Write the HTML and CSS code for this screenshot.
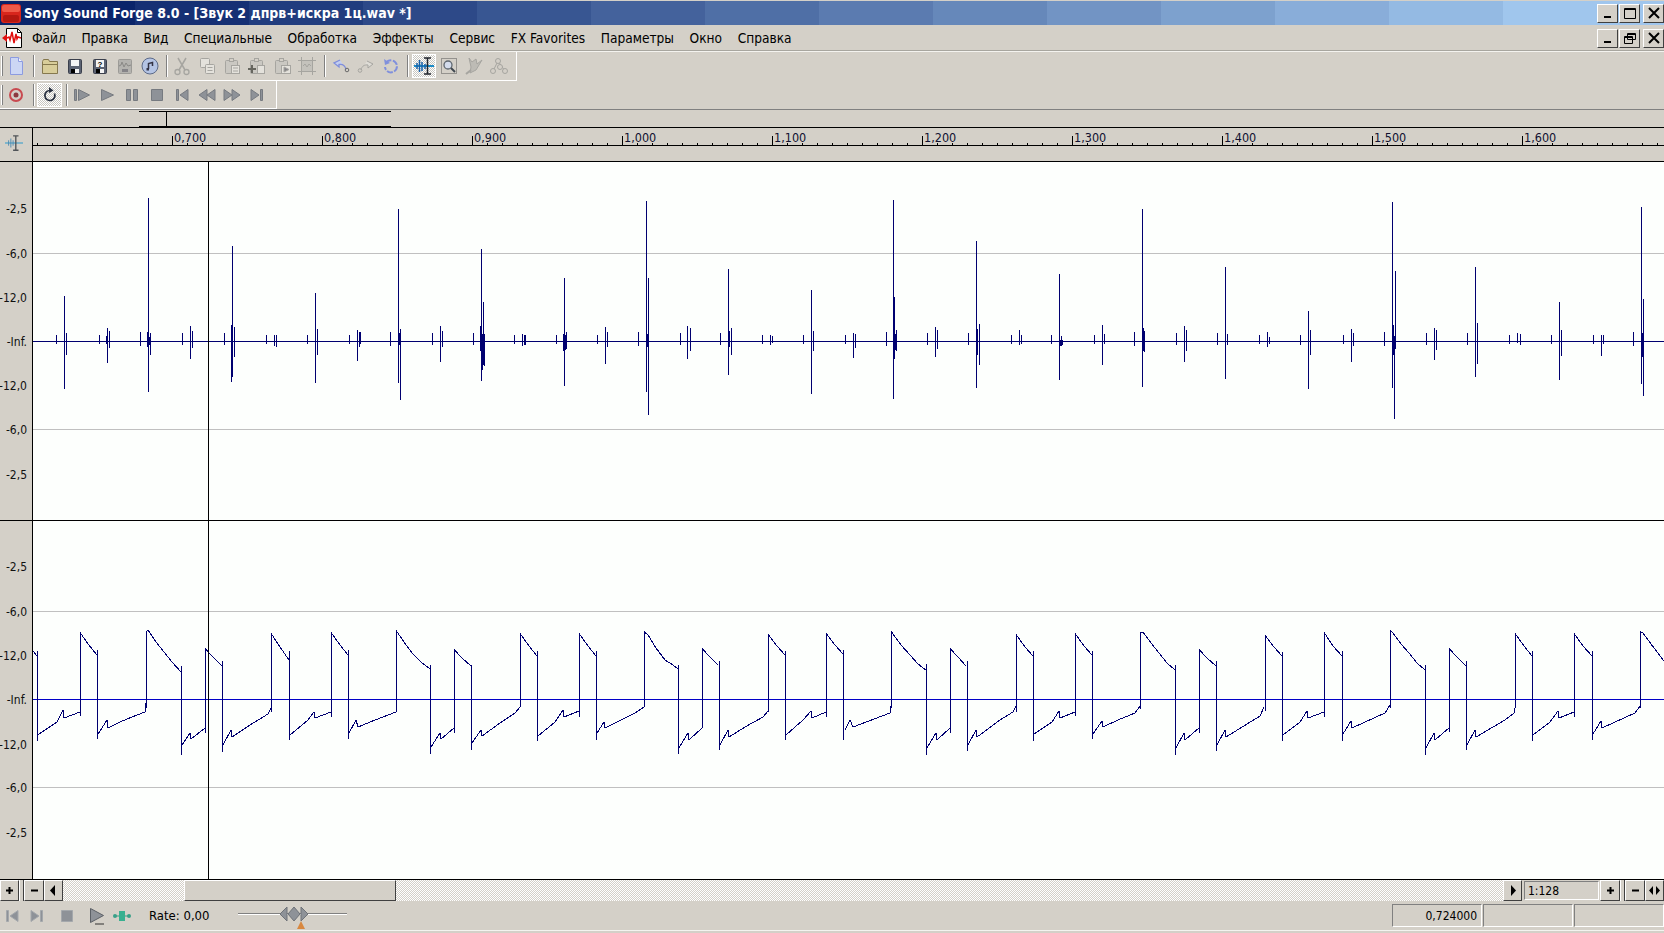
FILE: index.html
```html
<!DOCTYPE html>
<html lang="ru">
<head>
    <meta charset="UTF-8">
    <title>Sony Sound Forge 8.0</title>
    <link rel="stylesheet" href="styles.css">
</head>
<body>
    <div class="titlebar">
        <svg class="app-icon" width="22" height="21" viewBox="0 0 22 21"><rect x="1" y="1" width="20" height="19" rx="3" fill="#d8261c"/><rect x="2" y="2" width="18" height="7" rx="2" fill="#ee5a48"/><rect x="3" y="12" width="16" height="7" rx="2" fill="#b41810"/></svg>
        <span class="title-text">Sony Sound Forge 8.0 - [Звук 2 дпрв+искра 1ц.wav *]</span>
        <div class="win-buttons">
            <button class="win-btn"><svg width="12" height="12" viewBox="0 0 12 12"><rect x="2" y="9" width="7" height="2"/></svg></button>
            <button class="win-btn"><svg width="12" height="12" viewBox="0 0 12 12"><path d="M0.5 1.5h11v10h-11z M0.5 2.5h11" fill="none" stroke="#000"/></svg></button>
            <button class="win-btn win-close"><svg width="12" height="12" viewBox="0 0 12 12"><path d="M1 1l10 10M11 1L1 11" stroke="#000" stroke-width="2"/></svg></button>
        </div>
    </div>

    <div class="menubar">
        <svg class="doc-icon" width="22" height="22" viewBox="0 0 22 22"><path d="M4.5 1.5h11l4 4v15h-15z" fill="#fff" stroke="#000"/><path d="M15.5 1.5v4h4" fill="none" stroke="#000"/><path d="M5 11l2-1 1 3 2-8 2 11 2-9 1 5 1-2 3 1" fill="none" stroke="#e01010" stroke-width="1.5"/><path d="M0 11l5-4v8z" fill="#e01010"/></svg>
        <ul class="menu">
            <li>Файл</li>
            <li>Правка</li>
            <li>Вид</li>
            <li>Специальные</li>
            <li>Обработка</li>
            <li>Эффекты</li>
            <li>Сервис</li>
            <li>FX Favorites</li>
            <li>Параметры</li>
            <li>Окно</li>
            <li>Справка</li>
        </ul>
        <div class="win-buttons doc-buttons">
            <button class="win-btn"><svg width="12" height="12" viewBox="0 0 12 12"><rect x="2" y="9" width="7" height="2"/></svg></button>
            <button class="win-btn"><svg width="12" height="12" viewBox="0 0 12 12"><path d="M3.5 1.5h8v6h-8z M3.5 2.5h8 M0.5 4.5h8v7h-8z M0.5 5.5h8" fill="#d4d0c8" stroke="#000"/></svg></button>
            <button class="win-btn win-close"><svg width="12" height="12" viewBox="0 0 12 12"><path d="M1 1l10 10M11 1L1 11" stroke="#000" stroke-width="2"/></svg></button>
        </div>
    </div>

    <div class="toolbar toolbar-main">
        <span class="grip"></span>
        <span class="tool"><svg viewBox="0 0 20 20"><path d="M4.5 1.5h8l4 4v13h-12z" fill="#ccd6f4" stroke="#8c9be0"/><path d="M12.5 1.5v4h4" fill="#f2f4fc" stroke="#8c9be0"/></svg></span>
        <span class="sep"></span>
        <span class="tool"><svg viewBox="0 0 20 20"><path d="M2.5 5.5l1-2h5l1 2h8v12h-15z" fill="#d8cd9a" stroke="#85784e"/><path d="M2.5 8.5h15" stroke="#85784e"/></svg></span>
        <span class="tool"><svg viewBox="0 0 20 20"><rect x="3.5" y="3.5" width="13" height="14" rx="1" fill="#5b6272" stroke="#3a3f4c"/><rect x="6" y="4" width="8" height="6" fill="#f4f4f4"/><rect x="6" y="13" width="8" height="4" fill="#f4f4f4"/><rect x="6" y="13" width="4" height="4" fill="#000"/></svg></span>
        <span class="tool"><svg viewBox="0 0 20 20"><rect x="3.5" y="3.5" width="13" height="14" rx="1" fill="#5b6272" stroke="#3a3f4c"/><rect x="6" y="4" width="8" height="7" fill="#f4f4f4"/><rect x="6" y="13" width="8" height="4" fill="#f4f4f4"/><rect x="6" y="13" width="4" height="4" fill="#000"/><text class="mini-q" x="10" y="10.5">?</text></svg></span>
        <span class="tool"><svg viewBox="0 0 20 20"><rect x="3.5" y="3.5" width="13" height="14" rx="1" fill="#b4b3af" stroke="#9c9b97"/><path d="M4 10l2-1 1-3 2 5 2-4 2 3 3-1" fill="none" stroke="#8a8986"/><rect x="7" y="13" width="6" height="3" fill="#858488"/></svg></span>
        <span class="tool"><svg viewBox="0 0 20 20"><circle cx="10" cy="10" r="8" fill="#b4c4e4" stroke="#5c6a88"/><path d="M8.500 13V7.500l4-1V10" fill="none" stroke="#334" stroke-width="1.500"/><rect x="6.500" y="12" width="2.500" height="2.500" fill="#334"/></svg></span>
        <span class="sep sep-tight"></span>
        <span class="tool"><svg class="dim" viewBox="0 0 20 20"><path d="M6 2l7 12M14 2L7 14" fill="none" stroke-width="1.500"/><circle cx="5.500" cy="16" r="2.500" fill="none" stroke-width="1.300"/><circle cx="14.500" cy="16" r="2.500" fill="none" stroke-width="1.300"/></svg></span>
        <span class="tool"><svg class="dim" viewBox="0 0 20 20"><rect x="3.5" y="2.5" width="9" height="9" rx="1" fill="#e4e2dc"/><rect x="8.5" y="8.5" width="9" height="9" rx="1" fill="#e4e2dc"/><path d="M10.5 11.5h5M10.5 14.5h5"/></svg></span>
        <span class="tool"><svg class="dim" viewBox="0 0 20 20"><rect x="3.5" y="4.5" width="12" height="13" rx="1"/><rect x="7.5" y="2.5" width="4" height="3" fill="#d4d0c8"/><rect x="9.5" y="9.5" width="8" height="8" fill="#e4e2dc"/><path d="M11 12h5M11 15h5"/></svg></span>
        <span class="tool"><svg class="dim" viewBox="0 0 20 20"><rect x="3.5" y="4.5" width="12" height="13" rx="1"/><rect x="7.5" y="2.5" width="4" height="3" fill="#d4d0c8"/><rect x="10.5" y="9.5" width="7" height="8" fill="#e4e2dc"/><path d="M1 13h8M5 9v8" stroke="#66665f" stroke-width="2"/></svg></span>
        <span class="tool"><svg class="dim" viewBox="0 0 20 20"><rect x="3.5" y="4.5" width="12" height="13" rx="1"/><rect x="7.5" y="2.5" width="4" height="3" fill="#d4d0c8"/><rect x="9.5" y="9.5" width="9" height="8" fill="#e4e2dc"/><path d="M12 11l5 2.5-5 2.5z" fill="#858488"/></svg></span>
        <span class="tool"><svg class="dim" viewBox="0 0 20 20"><rect x="4.5" y="4.5" width="11" height="11" fill="#c4c2bc"/><path d="M1 4.5h18M1 15.5h18M4.5 1v18M15.5 1v18M6 10l2-2 2 3 2-3 2 2" fill="none"/></svg></span>
        <span class="sep"></span>
        <span class="tool"><svg viewBox="0 0 20 20"><path d="M9 4L3 7l5 4V8.500c3-.5 6 .5 7 5" fill="#c4cff0" stroke="#7f8edc" stroke-width="1.300"/><circle cx="16" cy="14" r="1.800" fill="none" stroke="#6a6a6a"/></svg></span>
        <span class="tool"><svg class="dim" viewBox="0 0 20 20"><path d="M11 5l6 3-5 4V9c-3-.5-6 .5-7 5" fill="#dedcd6"/><circle cx="4" cy="14.500" r="1.800" fill="none"/></svg></span>
        <span class="tool"><svg viewBox="0 0 20 20"><path d="M5 7a6 6 0 1 1-1 4" fill="none" stroke="#8090dc" stroke-width="2" stroke-dasharray="6 1.500"/><path d="M3 3l1 6 5-2z" fill="#8090dc"/></svg></span>
        <span class="sep sep-tool"></span>
        <span class="tool tool-active"><svg viewBox="0 0 20 20"><path d="M0 10h20" stroke="#1c8cc8" stroke-width="2"/><path d="M3 7v6M5.500 4v12M8 6v9M11 8v5" stroke="#1860a8" stroke-width="1.500"/><path d="M10 2h7M10 18h7M13.500 2v16" stroke="#20242c" stroke-width="1.500"/></svg></span>
        <span class="tool"><svg viewBox="0 0 20 20"><rect x="2.500" y="2.500" width="15" height="15" fill="none" stroke="#555" stroke-dasharray="1 1"/><circle cx="9" cy="9" r="4" fill="#d4dcec" stroke="#606870" stroke-width="1.300"/><path d="M12 12l4 4" stroke="#404850" stroke-width="2"/></svg></span>
        <span class="tool"><svg class="dim" viewBox="0 0 20 20"><path d="M5 2l3 4 4-3 1 5 5-4-6 10-6 3 1-6z" fill="#bdbbb5"/><path d="M2 18l5-4" stroke-width="2"/></svg></span>
        <span class="tool"><svg class="dim" viewBox="0 0 20 20"><path d="M4 15l5-10 7 10" fill="none"/><circle cx="9" cy="5" r="2.500" fill="#d4d0c8"/><circle cx="4" cy="15" r="2.500" fill="#d4d0c8"/><circle cx="16" cy="15" r="2.500" fill="#d4d0c8"/><circle cx="11" cy="11" r="2.500" fill="#d4d0c8"/></svg></span>
    </div>

    <div class="toolbar toolbar-transport">
        <span class="grip"></span>
        <span class="tool"><svg viewBox="0 0 20 20"><circle cx="10" cy="10" r="6" fill="none" stroke="#c84a50" stroke-width="2"/><circle cx="10" cy="10" r="2.500" fill="#8c3a40"/></svg></span>
        <span class="sep"></span>
        <span class="tool tool-active"><svg viewBox="0 0 20 20"><path d="M14.500 8.500a5 5 0 1 1-4.500-3" fill="none" stroke="#283040" stroke-width="1.700"/><path d="M9 2l4.500 3.500L9 8z" fill="#283040"/></svg></span>
        <span class="sep sep-tight"></span>
        <span class="tool"><svg class="steel" viewBox="0 0 20 20"><path d="M2.500 4.500h2v11h-2zM6.500 4.500l11 5.500-11 5.500z"/></svg></span>
        <span class="tool"><svg class="steel" viewBox="0 0 20 20"><path d="M4.500 4.500l12 5.500-12 5.500z"/></svg></span>
        <span class="tool"><svg class="steel" viewBox="0 0 20 20"><path d="M4.500 4.500h4v11h-4zM11.500 4.500h4v11h-4z"/></svg></span>
        <span class="tool"><svg class="steel" viewBox="0 0 20 20"><path d="M4.500 4.500h11v11h-11z"/></svg></span>
        <span class="tool"><svg class="steel" viewBox="0 0 20 20"><path d="M4.500 4.500h2v11h-2zM16 4.500l-8 5.500 8 5.500z"/></svg></span>
        <span class="tool"><svg class="steel" viewBox="0 0 20 20"><path d="M10 4.500l-8 5.500 8 5.500zM18 4.500l-8 5.500 8 5.500z"/></svg></span>
        <span class="tool"><svg class="steel" viewBox="0 0 20 20"><path d="M2 4.500l8 5.500-8 5.500zM10 4.500l8 5.500-8 5.500z"/></svg></span>
        <span class="tool"><svg class="steel" viewBox="0 0 20 20"><path d="M4 4.500l8 5.500-8 5.500zM13.500 4.500h2v11h-2z"/></svg></span>
    </div>

    <div class="overview">
        <div class="overview-range"><span class="overview-cursor"></span></div>
    </div>

    <div class="ruler">
        <div class="ruler-corner">
            <svg width="18" height="18" viewBox="0 0 20 20"><path d="M0 10h20" stroke="#58a8cc" stroke-width="1.500"/><path d="M4 7v6M6.500 5v10M9 7v6" stroke="#4a88b0"/><path d="M9 2h6M9 18h6M12 2v16" stroke="#505458" stroke-width="1.500"/></svg>
        </div>
        <div class="ruler-track">
            <div class="ruler-scale">
                <span class="ruler-mark">0,700</span>
                <span class="ruler-mark">0,800</span>
                <span class="ruler-mark">0,900</span>
                <span class="ruler-mark">1,000</span>
                <span class="ruler-mark">1,100</span>
                <span class="ruler-mark">1,200</span>
                <span class="ruler-mark">1,300</span>
                <span class="ruler-mark">1,400</span>
                <span class="ruler-mark">1,500</span>
                <span class="ruler-mark">1,600</span>
            </div>
        </div>
    </div>

    <div class="wave-panel">
        <!-- viewBox uses the window's own y so the numbers read as page pixels -->
        <svg class="channel" viewBox="0 162 1664 359">
            <rect class="db-col" x="0" y="162" width="32" height="359"/>
            <path class="grid" d="M33 253.500H1664M33 429.500H1664"/>
            <path class="zero zero-top" d="M33 341.500H1664"/>
            <path class="wave" d="M56.500 335V344M64.500 296V389M66.500 333V355M99.500 335V344M107.500 328V363M106.500 336V344M109.500 331V348M140.500 332V346M148.500 198V392M147.500 332V347M149.500 337V345M150.500 333V355M182.500 333V345M190.500 326V359M192.500 331V348M224.500 333V345M231.500 325V382M232.500 246V377M234.500 327V357M266.500 335V344M274.500 335V346M276.500 335V347M307.500 335V344M315.500 293V383M317.500 329V355M349.500 335V344M357.500 330V361M359.500 332V347M360.500 332V344M390.500 332V346M398.500 209V383M399.500 333V345M400.500 329V400
            M432.500 333V345M440.500 326V362M442.500 331V347M473.500 333V345M480.500 326V351M481.500 249V381M482.500 334V370M483.500 302V365M484.500 334V366M514.500 335V344M522.500 334V346M524.500 335V345M525.500 335V345M556.500 335V344M563.500 334V351M564.500 278V386M565.500 335V350M566.500 332V349M597.500 335V344M605.500 327V364M607.500 332V347M638.500 332V346M646.500 201V392M647.500 334V347M648.500 278V415M680.500 333V345M687.500 326V359M690.500 328V351M720.500 333V345M728.500 269V375M729.500 331V347M731.500 328V355M762.500 335V344M770.500 335V345M772.500 336V343M803.500 335V344M811.500 290V394M813.500 331V351M845.500 335V344M853.500 333V358M855.500 334V348M886.500 332V346M893.500 200V399M894.500 297V359M895.500 334V350M896.500 330V351M927.500 333V345M935.500 327V357M937.500 330V349M968.500 333V345M976.500 241V388M977.500 329V355M979.500 324V365M1011.500 335V344M1019.500 330V345M1021.500 335V344
            M1051.500 335V344M1059.500 274V380M1060.500 340V346M1061.500 336V346M1062.500 340V345M1094.500 335V344M1102.500 325V365M1104.500 334V344M1134.500 332V346M1142.500 209V387M1143.500 328V351M1144.500 331V352M1176.500 333V345M1184.500 326V362M1186.500 330V351M1217.500 333V345M1225.500 267V379M1227.500 334V345M1259.500 335V344M1267.500 332V347M1269.500 337V344M1300.500 335V345M1308.500 311V389M1310.500 330V355M1343.500 335V344M1351.500 329V362M1353.500 333V346M1384.500 332V346M1392.500 202V388M1393.500 325V355M1394.500 336V419M1395.500 271V349M1426.500 333V345M1434.500 328V360M1436.500 330V350M1467.500 333V345M1475.500 267V377M1477.500 323V364M1509.500 335V344M1517.500 333V343M1520.500 334V345M1551.500 335V344M1559.500 302V380M1561.500 330V356M1593.500 335V344M1601.500 335V356M1603.500 335V344M1633.500 332V346M1641.500 207V384M1642.500 333V357M1643.500 299V396"/>
            <path class="cursor" d="M208.500 162V521"/>
            <path class="edge" d="M32.500 162V521M0 520.500H1664"/>
            <text class="db" x="27" y="213">-2,5</text>
            <text class="db" x="27" y="258">-6,0</text>
            <text class="db" x="27" y="302">-12,0</text>
            <text class="db" x="27" y="346">-Inf.</text>
            <text class="db" x="27" y="390">-12,0</text>
            <text class="db" x="27" y="434">-6,0</text>
            <text class="db" x="27" y="479">-2,5</text>
        </svg>
        <svg class="channel" viewBox="0 521 1664 359">
            <rect class="db-col" x="0" y="521" width="32" height="359"/>
            <path class="grid" d="M33 611.500H1664M33 787.500H1664"/>
            <path class="zero zero-bottom" d="M33 699.500H1664"/>
            <path class="wave" d="M33 651L37 656M37.500 651V741M37.500 735L57 722L63 710L64 718L80 712M80.500 716V633L88 644L97 655
            M97.500 650V739M97.500 735L107 720L108 728L120 722L132 717L145 712L146 703M146.500 708V632L148 630L156 642L164 652L172 662L181 672
            M181.500 666V755M182 745L190 733L191 739L205 728M205.500 733V649L213 657L222 666
            M222.500 661V752M223 745L231 730L232 737L250 725L268 714L271 708M271.500 712V634L280 647L289 660
            M289.500 651V740M290 735L308 720L314 712L315 718L331 712M331.500 717V633L340 645L348 655
            M348.500 650V739M349 733L356 720L358 727L375 720L396 712L396 704M396.500 708V631L404 642L412 653L421 662L430 669
            M430.500 665V754M431 747L440 733L441 739L454 728M454.500 733V650L462 658L471 666
            M471.500 665V750M472 743L481 730L482 736L500 723L515 713L520 707M520.500 707V634L529 646L537 656
            M537.500 651V741M538 736L555 722L563 710L564 717L579 711M579.500 717V634L588 646L596 656
            M596.500 651V740M597 733L604 722L605 728L635 713L644 707M644.500 707V632L648 635L656 648L665 660L673 665L678 669
            M678.500 665V754M679 748L688 733L689 740L702 728M702.500 728V649L710 657L718 665
            M719.500 661V750M720 745L728 730L729 737L745 727L763 717L768 711M768.500 712V635L777 646L785 655
            M785.500 651V740M786 735L803 720L811 711L812 718L826 712M826.500 717V634L835 645L843 654
            M843.500 650V740M845 730L850 720L853 727L890 713L891 706M891.500 708V632L893 634L901 645L910 655L918 664L926 670
            M926.500 664V755M927 748L936 733L937 740L950 728M950.500 733V649L958 657L966 666
            M967.500 661V751M968 745L976 730L977 737L1000 720L1013 712L1016 706M1016.500 712V635L1025 647L1033 656
            M1033.500 651V741M1034 734L1052 722L1059 711L1060 718L1075 712M1075.500 716V634L1084 646L1092 655
            M1092.500 651V739M1093 734L1102 721L1103 727L1118 720L1135 713L1140 706M1140.500 709V632L1143 632L1151 643L1159 653L1167 663L1175 670
            M1175.500 665V755M1176 748L1184 733L1185 740L1199 728M1199.500 733V650L1207 658L1216 666
            M1216.500 661V751M1217 745L1225 730L1226 737L1260 716L1264 707M1265.500 711V636L1274 647L1282 656
            M1282.500 652V741M1283 735L1300 722L1307 711L1308 718L1324 712M1324.500 717V633L1333 646L1342 656
            M1342.500 651V741M1343 734L1351 721L1352 728L1385 713L1390 705M1390.500 708V631L1393 633L1401 644L1409 653L1417 663L1425 670
            M1425.500 665V755M1426 748L1434 733L1435 740L1449 728M1449.500 732V649L1457 657L1466 666
            M1466.500 661V750M1467 745L1475 730L1476 737L1505 720L1514 713L1515 708M1515.500 708V634L1524 646L1532 656
            M1532.500 651V741M1533 735L1550 722L1558 711L1559 718L1574 712M1574.500 717V634L1583 646L1592 656
            M1592.500 651V740M1593 734L1601 721L1602 728L1635 713L1640 706M1640.500 708V632L1643 633L1651 644L1664 661"/>
            <path class="cursor" d="M208.500 521V880"/>
            <path class="edge" d="M32.500 521V880M0 879.500H1664"/>
            <text class="db" x="27" y="571">-2,5</text>
            <text class="db" x="27" y="616">-6,0</text>
            <text class="db" x="27" y="660">-12,0</text>
            <text class="db" x="27" y="704">-Inf.</text>
            <text class="db" x="27" y="749">-12,0</text>
            <text class="db" x="27" y="792">-6,0</text>
            <text class="db" x="27" y="837">-2,5</text>
        </svg>
    </div>

    <div class="scrollrow">
        <button class="sb-btn"><svg width="7" height="7" viewBox="0 0 7 7"><path d="M0 2.500h7v2H0zM2.500 0h2v7h-2z"/></svg></button>
        <span class="sb-gap"></span>
        <button class="sb-btn sb-wide"><svg width="7" height="7" viewBox="0 0 7 7"><path d="M0 2.500h7v2H0z"/></svg></button>
        <button class="sb-btn"><svg width="9" height="11" viewBox="0 0 9 11"><path d="M6 0v11L1 5.500z"/></svg></button>
        <div class="sb-track"><div class="sb-thumb"></div></div>
        <button class="sb-btn"><svg width="9" height="11" viewBox="0 0 9 11"><path d="M3 0v11l5-5.500z"/></svg></button>
        <div class="zoom-box">1:128</div>
        <button class="sb-btn sb-wide"><svg width="7" height="7" viewBox="0 0 7 7"><path d="M0 2.500h7v2H0zM2.500 0h2v7h-2z"/></svg></button>
        <span class="sb-gap"></span>
        <button class="sb-btn sb-wide"><svg width="7" height="7" viewBox="0 0 7 7"><path d="M0 2.500h7v2H0z"/></svg></button>
        <button class="sb-btn"><svg width="11" height="9" viewBox="0 0 11 9"><path d="M4 0v9L0 4.500zM7 0v9l4-4.500z"/></svg></button>
    </div>

    <div class="statusbar">
        <span class="st-icon"><svg class="steel-soft" width="20" height="20" viewBox="0 0 20 20"><path d="M4.500 4.500h2v11h-2zM16 4.500l-8 5.500 8 5.500z"/></svg></span>
        <span class="st-icon"><svg class="steel-soft" width="20" height="20" viewBox="0 0 20 20"><path d="M4 4.500l8 5.500-8 5.500zM13.500 4.500h2v11h-2z"/></svg></span>
        <span class="st-icon st-gap"><svg class="steel-soft" width="20" height="20" viewBox="0 0 20 20"><path d="M4.500 4.500h11v11h-11z"/></svg></span>
        <span class="st-icon st-gap"><svg width="20" height="20" viewBox="0 0 20 20"><path class="st-play" d="M3.500 2.500l13 7-13 7z"/><path d="M8 18h9" stroke="#303030"/></svg></span>
        <span class="st-icon"><svg width="20" height="20" viewBox="0 0 20 20"><path d="M2 10h16" stroke="#3a9a80"/><rect x="7" y="5" width="6" height="10" fill="#38b090"/><circle cx="3" cy="10" r="2" fill="#38a088"/><circle cx="17" cy="10" r="2" fill="#38a088"/></svg></span>
        <span class="rate">Rate: 0,00</span>
        <svg class="rate-slider" width="112" height="30" viewBox="0 0 112 30">
            <path d="M0 12.500H109" stroke="#808080"/><path d="M0 13.500H109" stroke="#fff"/>
            <path class="thumb" d="M42 13l7-7v14zM50 13l6-7 6 7-6 7zM63 6l7 7-7 7z"/>
            <path d="M59 28l4-8 4 8z" fill="#d88840"/>
        </svg>
        <div class="fields">
            <div class="field">0,724000</div>
            <div class="field"></div>
            <div class="field"></div>
        </div>
    </div>
</body>
</html>
```
FILE: styles.css
```css
* {
    margin: 0;
    padding: 0;
    box-sizing: border-box;
}

html, body {
    height: 100%;
    overflow: hidden;
}

body {
    background-color: #d4d0c8;
    color: #000;
    font-family: "DejaVu Sans Condensed", "Liberation Sans", sans-serif;
    font-size: 13px;
    display: flex;
    flex-direction: column;
}

button {
    font: inherit;
    cursor: default;
}

/* title bar */
.titlebar {
    height: 25px;
    flex: none;
    display: flex;
    align-items: center;
    border-top: 1px solid #d4d0c8;
    background: linear-gradient(to right,
        #0a246a 0 135px, #163074 135px 249px, #213d7e 249px 363px, #2d4988 363px 477px,
        #385692 477px 591px, #44629c 591px 705px, #4f6fa6 705px 819px, #5b7bb0 819px 933px,
        #6688ba 933px 1047px, #7294c4 1047px 1161px, #7da1ce 1161px 1275px,
        #89add9 1275px 1389px, #94bae3 1389px 1503px, #a0c6ed 1503px);
}

.app-icon {
    flex: none;
}

.title-text {
    margin-left: 2px;
    color: #fff;
    font-size: 14px;
    font-weight: bold;
    white-space: nowrap;
}

.win-buttons {
    margin-left: auto;
    display: flex;
    gap: 1px;
}

.win-btn {
    width: 21px;
    height: 19px;
    display: flex;
    align-items: center;
    justify-content: center;
    background-color: #d4d0c8;
    border: 1px solid;
    border-color: #fff #404040 #404040 #fff;
}

.win-close {
    margin-left: 2px;
}

/* menu */
.menubar {
    height: 27px;
    flex: none;
    display: flex;
    align-items: center;
    border-bottom: 1px solid #f4f3ef;
    box-shadow: inset 0 -1px 0 #a8a69f;
}

.doc-icon {
    flex: none;
    margin-left: 2px;
}

.menu {
    list-style: none;
    display: flex;
    margin-left: 8px;
    gap: 15.6px;
    font-size: 13.6px;
}

.doc-buttons {
    gap: 1px;
}

/* toolbars */
.toolbar {
    flex: none;
    display: flex;
    align-items: center;
    border-right: 1px solid #fff;
    border-bottom: 1px solid #fff;
}

.toolbar-main {
    width: 517px;
    height: 29px;
}

.toolbar-transport {
    width: 277px;
    height: 28px;
}

.grip {
    width: 3px;
    height: 20px;
    border-right: 1px solid #808080;
    box-shadow: inset -1px 0 0 #fff;
}

.tool {
    flex: none;
    width: 25px;
    height: 24px;
    display: flex;
    align-items: center;
    justify-content: center;
}

.tool svg {
    width: 20px;
    height: 20px;
}

.tool-active {
    background: repeating-conic-gradient(#fff 0 25%, #c8c6c0 0 50%) 0 0 / 2px 2px;
    border: 1px solid #fff;
}

.toolbar-main .tool-active {
    width: 24px;
}

.sep {
    flex: none;
    width: 2px;
    height: 22px;
    margin: 0 2px 0 5px;
    border-left: 1px solid #808080;
    border-right: 1px solid #fff;
}

.sep-tight {
    margin: 0 1px 0 4px;
}

.sep-tool {
    margin: 0 3px 0 4px;
}

.dim {
    fill: #cac8c2;
    stroke: #a6a5a0;
}

.steel {
    fill: #8e9298;
    stroke: #767a80;
}

.steel-soft {
    fill: #8e9298;
    stroke: #a4a8ac;
}

.st-play {
    fill: #8e9298;
    stroke: #5c6066;
}

.mini-q {
    font-family: "Liberation Sans", sans-serif;
    font-size: 8px;
    font-weight: bold;
    text-anchor: middle;
    fill: #000;
}

/* overview strip */
.overview {
    height: 18px;
    flex: none;
    padding: 1px 0 0 139px;
    border-top: 1px solid #808080;
}

.overview-range {
    width: 252px;
    height: 16px;
    padding-left: 27px;
    border-top: 1px solid #000;
    border-bottom: 1px solid #000;
}

.overview-cursor {
    display: block;
    width: 1px;
    height: 100%;
    background-color: #000;
}

/* time ruler */
.ruler {
    height: 35px;
    flex: none;
    display: flex;
    border-top: 1px solid #000;
    border-bottom: 1px solid #000;
}

.ruler-corner {
    width: 33px;
    flex: none;
    padding: 6px 0 0 5px;
    border-right: 1px solid #000;
}

.ruler-track {
    flex: 1;
    min-width: 0;
    overflow: hidden;
}

.ruler-scale {
    height: 18px;
    display: flex;
    padding-left: 139px;
    border-bottom: 1px solid #000;
    background: repeating-linear-gradient(to right, #000 0 1px, transparent 1px 15px) 4px 100% / 100% 2px no-repeat;
}

.ruler-mark {
    flex: none;
    width: 150px;
    padding: 2px 0 0 2px;
    line-height: 15px;
    font-size: 12.5px;
    color: #101030;
    background: linear-gradient(#000, #000) 0 100% / 1px 9px no-repeat;
}

/* waveform */
.wave-panel {
    height: 718px;
    flex: none;
    display: flex;
    flex-direction: column;
    background-color: #fdfffd;
}

.channel {
    display: block;
    width: 1664px;
    height: 359px;
    shape-rendering: crispEdges;
}

.db-col {
    fill: #d4d0c8;
}

.grid {
    stroke: #c0c0c0;
    fill: none;
}

.zero {
    fill: none;
}

.zero-top {
    stroke: #000070;
}

.zero-bottom {
    stroke: #0000c8;
}

.wave {
    fill: none;
    stroke: #000070;
}

.cursor {
    stroke: #000;
    fill: none;
}

.edge {
    stroke: #000;
    fill: none;
}

.db {
    font-size: 12px;
    text-anchor: end;
    fill: #101010;
}

/* scroll row */
.scrollrow {
    height: 21px;
    flex: none;
    display: flex;
}

.sb-btn {
    flex: none;
    width: 19px;
    height: 21px;
    display: flex;
    align-items: center;
    justify-content: center;
    background-color: #d4d0c8;
    border: 1px solid;
    border-color: #fff #404040 #404040 #fff;
}

.sb-wide {
    width: 20px;
}

.sb-gap {
    flex: none;
    width: 5px;
    border-left: 1px solid #fff;
    border-right: 1px solid #404040;
}

.sb-track {
    flex: 1;
    padding-left: 121px;
    background: repeating-conic-gradient(#fff 0 25%, #d4d0c8 0 50%) 0 0 / 2px 2px;
}

.sb-thumb {
    width: 212px;
    height: 21px;
    background-color: #d4d0c8;
    border: 1px solid;
    border-color: #fff #404040 #404040 #fff;
}

.zoom-box {
    flex: none;
    width: 75px;
    height: 19px;
    margin: 1px 1px 0 2px;
    padding-left: 3px;
    line-height: 18px;
    font-size: 12px;
    border: 1px solid;
    border-color: #808080 #fff #fff #808080;
}

/* status bar */
.statusbar {
    height: 30px;
    flex: none;
    display: flex;
    align-items: center;
    border-bottom: 1px solid #f4f3ef;
}

.st-icon {
    flex: none;
    width: 24px;
    margin-right: 1px;
    display: flex;
    justify-content: center;
}

.st-gap {
    margin-left: 5px;
}

.rate {
    margin-left: 14px;
    white-space: nowrap;
}

.rate-slider {
    flex: none;
    margin-left: 29px;
}

.thumb {
    fill: #8e9298;
    stroke: #6e7278;
}

.fields {
    margin-left: auto;
    display: flex;
    gap: 1px;
}

.field {
    width: 90px;
    height: 23px;
    padding-right: 4px;
    line-height: 22px;
    text-align: right;
    font-size: 12px;
    border: 1px solid;
    border-color: #808080 #fff #fff #808080;
}
```
